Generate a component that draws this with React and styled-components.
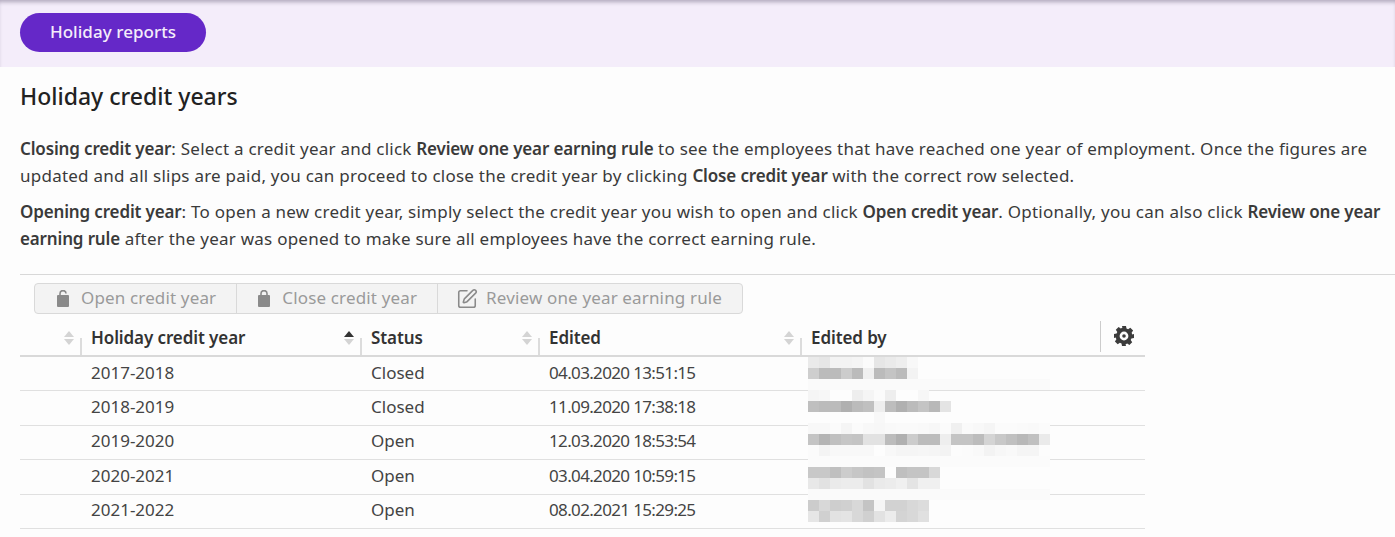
import React from "react";
import styled, { createGlobalStyle } from "styled-components";
import { SquarePen } from "lucide-react";

const GlobalStyle = createGlobalStyle`
  html, body {
    margin: 0;
    background: #fdfdfd;
    overflow: hidden;
  }
  body {
    font-family: "Noto Sans", "Open Sans", sans-serif;
    color: #333;
  }
`;

const TopBar = styled.div`
  height: 67px;
  box-sizing: border-box;
  padding: 13px 20px 0;
  background: #f4edfa;
  box-shadow: inset 0 4px 4px -2px rgba(70, 60, 90, 0.4);
`;

const PillButton = styled.button`
  width: 186px;
  height: 39px;
  padding: 0 0 2px;
  border: 0;
  border-radius: 20px;
  background: #6528c8;
  color: #f4edfa;
  font: 500 17px "Noto Sans", sans-serif;
  letter-spacing: 0.05px;
`;

const Content = styled.main`
  padding: 13px 0 0 20px;
`;

const Title = styled.h2`
  margin: 0 0 23px;
  font-size: 23px;
  line-height: 32px;
  font-weight: 500;
  color: #222;
`;

const Paragraph = styled.p`
  margin: 0 0 9px;
  font-size: 17px;
  line-height: 27px;
  letter-spacing: 0.24px;
  white-space: nowrap;
  color: #3a3a3a;
  b {
    font-weight: 600;
    letter-spacing: -0.15px;
  }
`;

const Divider = styled.hr`
  margin: 22px 0 8px;
  border: 0;
  border-top: 1px solid #d8d8d8;
`;

const Toolbar = styled.div`
  display: inline-flex;
  margin-left: 14px;
  height: 31px;
  box-sizing: border-box;
  border: 1px solid #d9d9d9;
  border-radius: 4px;
  background: #f3f3f3;
`;

const ToolButton = styled.div`
  display: flex;
  align-items: center;
  gap: 12px;
  padding: 0 20px 2px 22px;
  font-size: 17px;
  letter-spacing: 0.15px;
  color: #9a9a9a;
  & + & {
    border-left: 1px solid #d9d9d9;
    padding-left: 21px;
  }
  svg {
    flex: none;
    margin-top: 2px;
  }
`;

const PenIcon = styled(SquarePen)`
  margin: 2px -4px 0 -3px;
`;

const TableWrap = styled.div`
  position: relative;
  width: 1125px;
  margin-top: 5px;
`;

const Table = styled.table`
  width: 100%;
  border-collapse: collapse;
  table-layout: fixed;
`;

const HeadCell = styled.th`
  position: relative;
  height: 36px;
  padding: 0 9px;
  box-sizing: border-box;
  font-size: 17px;
  font-weight: 600;
  letter-spacing: -0.1px;
  text-align: left;
  color: #333;
  border-bottom: 2px solid #d9d9d9;
  &::after {
    content: "";
    display: ${({ $last }) => ($last ? "none" : "block")};
    position: absolute;
    right: 0;
    bottom: 0;
    height: 17px;
    border-right: 2px solid #dcdcdc;
  }
`;

const SortMark = styled.span`
  position: absolute;
  right: 8px;
  top: 12px;
  width: 10px;
  height: 14px;
  &::before,
  &::after {
    content: "";
    position: absolute;
    left: 0;
    border-left: 5px solid transparent;
    border-right: 5px solid transparent;
  }
  &::before {
    top: 0;
    border-bottom: 6px solid ${({ $up }) => ($up ? "#333" : "#d4d4d4")};
  }
  &::after {
    bottom: 0;
    border-top: 6px solid #d4d4d4;
  }
`;

const GearCell = styled.th`
  height: 36px;
  padding: 0;
  border-bottom: 2px solid #d9d9d9;
  vertical-align: top;
`;

const GearBox = styled.div`
  height: 31px;
  margin-top: 2px;
  box-sizing: border-box;
  padding: 0 0 2px 13px;
  border-left: 1px solid #ccc;
  display: flex;
  align-items: center;
`;

const Cell = styled.td`
  height: 34.5px;
  padding: 0 9px 3px;
  box-sizing: border-box;
  font-size: 17px;
  letter-spacing: ${({ $date }) => ($date ? "-0.65px" : "0")};
  color: #444;
  border-bottom: 1px solid #e0e0e0;
`;

const Blur = styled.svg`
  position: absolute;
  left: 788px;
  top: 38px;
`;

const Gear = () => (
  <svg width="20" height="20" viewBox="0 0 20 20">
    <path
      fill="#3c3c3c"
      fillRule="evenodd"
      d="M8 0h4l.5 2.6 1.6.7 2.2-1.5 2.8 2.8-1.5 2.2.7 1.6L20 8v4l-2.6.5-.7 1.6 1.5 2.2-2.8 2.8-2.2-1.5-1.6.7L12 20H8l-.5-2.6-1.6-.7-2.2 1.5-2.8-2.8 1.5-2.2-.7-1.6L0 12V8l2.6-.5.7-1.6-1.5-2.2 2.8-2.8 2.2 1.5 1.6-.7zM10 5.6a4.4 4.4 0 1 0 0 8.8 4.4 4.4 0 0 0 0-8.8z"
    />
    <circle cx="10" cy="10" r="1.8" fill="#3c3c3c" />
  </svg>
);

const ClosedLock = () => (
  <svg width="12" height="17" viewBox="0 0 12 17">
    <path fill="none" stroke="#8a8a8a" strokeWidth="1.6" d="M3 6V3.6a3 3 0 0 1 6 0V6" />
    <rect x="0" y="5" width="12" height="12" rx="1" fill="#8a8a8a" />
  </svg>
);

const OpenLock = () => (
  <svg width="12" height="17" viewBox="0 0 12 17">
    <path fill="none" stroke="#8a8a8a" strokeWidth="1.6" d="M3 6V3.6a3 3 0 0 1 6 0" />
    <rect x="0" y="5" width="12" height="12" rx="1" fill="#8a8a8a" />
  </svg>
);

const rows = [
  ["2017-2018", "Closed", "04.03.2020 13:51:15"],
  ["2018-2019", "Closed", "11.09.2020 17:38:18"],
  ["2019-2020", "Open", "12.03.2020 18:53:54"],
  ["2020-2021", "Open", "03.04.2020 10:59:15"],
  ["2021-2022", "Open", "08.02.2021 15:29:25"],
];

const columns = [
  { label: "", width: 62 },
  { label: "Holiday credit year", width: 280, up: true },
  { label: "Status", width: 178 },
  { label: "Edited", width: 262 },
];

// redacted names, one row of grey values per 11px band
const mosaic = [
  ["ea", "e6", "f3", "f3", "f5", "fb", "e6", "ea", "ee", "f8"],
  ["ce", "bb", "bb", "cc", "bb", "f0", "bb", "c4", "bb", "f3"],
  Array(22).fill("fa"),
  ["f5", "f7", "fd", "fd", "ee", "f5", "fb", "ee", "fd", "fd", "f7"],
  ["bf", "bb", "bb", "b0", "bb", "c0", "ee", "bd", "b0", "bb", "c4", "b8", "e4"],
  ["fd", "fd", "fd", "fd", "fd", "fd", "f8"],
  ["f8", "f8", "fb", "f5", "fb", "f8", "f7", "f9", "fa", "fa", "f9", "f7", "fb", "f0", "fa", "f8", "f5", "fb", "fb", "fa", "f9", "fb"],
  ["c4", "b4", "c0", "c6", "c4", "e2", "e2", "bc", "b0", "cc", "bc", "bc", "ee", "c4", "c4", "bc", "d4", "c8", "c0", "b8", "c0", "ea"],
  ["fb", "f4", "f8", "f8", "f8", "f8", "fd", "f8", "f5", "f5", "f6", "f5", "f3", "fc", "fb", "f9", "f3", "f7", "f9", "f5", "f5", "fc"],
  Array(22).fill("fb"),
  ["c8", "c8", "bf", "cc", "c6", "c2", "c4", "fd", "bf", "c4", "c4", "d8"],
  ["e8", "e2", "ea", "ec", "ec", "e2", "ea", "ec", "f0", "e4", "f0", "f0"],
  Array(22).fill("fa"),
  ["cc", "d8", "ce", "d0", "d8", "c4", "f5", "d2", "d2", "d8", "dc"],
  ["e6", "d0", "e2", "e4", "d8", "d0", "e2", "ec", "d4", "d8", "e0"],
];

const App = () => (
  <>
    <GlobalStyle />
    <TopBar>
      <PillButton>Holiday reports</PillButton>
    </TopBar>
    <Content>
      <Title>Holiday credit years</Title>
      <Paragraph>
        <b>Closing credit year</b>: Select a credit year and click <b>Review one year earning rule</b> to see the employees that have reached one year of employment. Once the figures are
        <br />
        updated and all slips are paid, you can proceed to close the credit year by clicking <b>Close credit year</b> with the correct row selected.
      </Paragraph>
      <Paragraph>
        <b>Opening credit year</b>: To open a new credit year, simply select the credit year you wish to open and click <b>Open credit year</b>. Optionally, you can also click <b>Review one year</b>
        <br />
        <b>earning rule</b> after the year was opened to make sure all employees have the correct earning rule.
      </Paragraph>
      <Divider />
      <Toolbar>
        <ToolButton>
          <OpenLock />
          Open credit year
        </ToolButton>
        <ToolButton>
          <ClosedLock />
          Close credit year
        </ToolButton>
        <ToolButton>
          <PenIcon size={22} color="#8a8a8a" strokeWidth={1.7} />
          Review one year earning rule
        </ToolButton>
      </Toolbar>
      <TableWrap>
        <Table>
          <colgroup>
            {columns.map((c, i) => (
              <col key={i} style={{ width: c.width }} />
            ))}
            <col style={{ width: 298 }} />
            <col />
          </colgroup>
          <thead>
            <tr>
              {columns.map((c, i) => (
                <HeadCell key={i}>
                  {c.label}
                  <SortMark $up={c.up} />
                </HeadCell>
              ))}
              <HeadCell $last>Edited by</HeadCell>
              <GearCell>
                <GearBox>
                  <Gear />
                </GearBox>
              </GearCell>
            </tr>
          </thead>
          <tbody>
            {rows.map((r) => (
              <tr key={r[0]}>
                <Cell />
                <Cell>{r[0]}</Cell>
                <Cell>{r[1]}</Cell>
                <Cell $date>{r[2]}</Cell>
                <Cell />
                <Cell />
              </tr>
            ))}
          </tbody>
        </Table>
        <Blur width="244" height="165" aria-hidden="true">
          {mosaic.map((line, y) =>
            line.map((g, x) => (
              <rect key={`${x}-${y}`} x={x * 11} y={y * 11} width="11" height="11" fill={`#${g}${g}${g}`} />
            ))
          )}
        </Blur>
      </TableWrap>
    </Content>
  </>
);

export default App;
